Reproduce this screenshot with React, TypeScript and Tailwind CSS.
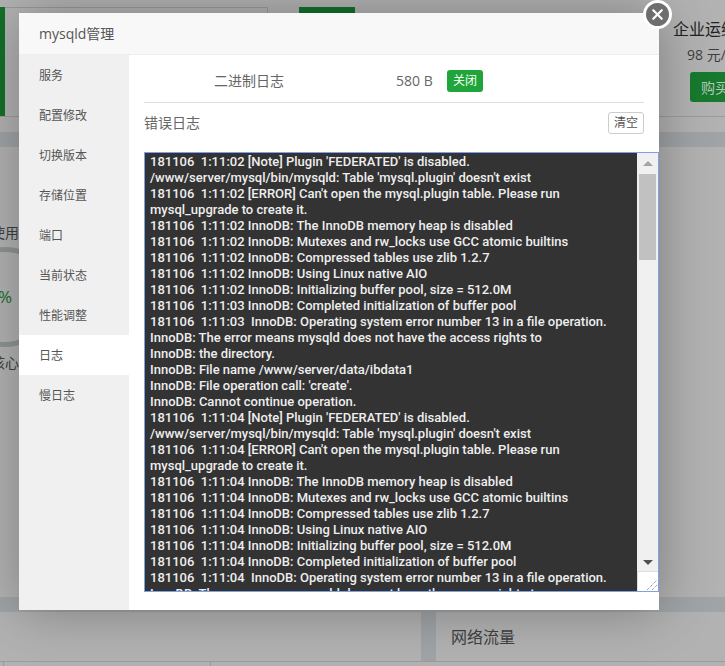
import { X } from "lucide-react";

const menu = ["服务", "配置修改", "切换版本", "存储位置", "端口", "当前状态", "性能调整", "日志", "慢日志"];

const logLines = [
  "181106  1:11:02 [Note] Plugin 'FEDERATED' is disabled.",
  "/www/server/mysql/bin/mysqld: Table 'mysql.plugin' doesn't exist",
  "181106  1:11:02 [ERROR] Can't open the mysql.plugin table. Please run",
  "mysql_upgrade to create it.",
  "181106  1:11:02 InnoDB: The InnoDB memory heap is disabled",
  "181106  1:11:02 InnoDB: Mutexes and rw_locks use GCC atomic builtins",
  "181106  1:11:02 InnoDB: Compressed tables use zlib 1.2.7",
  "181106  1:11:02 InnoDB: Using Linux native AIO",
  "181106  1:11:02 InnoDB: Initializing buffer pool, size = 512.0M",
  "181106  1:11:03 InnoDB: Completed initialization of buffer pool",
  "181106  1:11:03  InnoDB: Operating system error number 13 in a file operation.",
  "InnoDB: The error means mysqld does not have the access rights to",
  "InnoDB: the directory.",
  "InnoDB: File name /www/server/data/ibdata1",
  "InnoDB: File operation call: 'create'.",
  "InnoDB: Cannot continue operation.",
  "181106  1:11:04 [Note] Plugin 'FEDERATED' is disabled.",
  "/www/server/mysql/bin/mysqld: Table 'mysql.plugin' doesn't exist",
  "181106  1:11:04 [ERROR] Can't open the mysql.plugin table. Please run",
  "mysql_upgrade to create it.",
  "181106  1:11:04 InnoDB: The InnoDB memory heap is disabled",
  "181106  1:11:04 InnoDB: Mutexes and rw_locks use GCC atomic builtins",
  "181106  1:11:04 InnoDB: Compressed tables use zlib 1.2.7",
  "181106  1:11:04 InnoDB: Using Linux native AIO",
  "181106  1:11:04 InnoDB: Initializing buffer pool, size = 512.0M",
  "181106  1:11:04 InnoDB: Completed initialization of buffer pool",
  "181106  1:11:04  InnoDB: Operating system error number 13 in a file operation.",
  "InnoDB: The error means mysqld does not have the access rights to",
];

function PageBehind() {
  return (
    <div className="flex h-full flex-col bg-[#a0a4a6] text-[#3f3f3f]">
      <div className="bg-[#b2b2b2]">
        <div className="h-[7px]" />
        <div className="flex h-[110px] border-b border-[#9c9c9c]">
          <div className="w-[5px] shrink-0 bg-[#14702a]" />
          <div className="w-[263px] shrink-0 border-r border-t border-[#9a9a9a]" />
          <div className="ml-[31px] h-full w-[56px] shrink-0 bg-[#14702a]" />
          <div className="ml-[318px] flex shrink-0 flex-col items-start">
            <span className="mt-[13px] whitespace-nowrap text-[16px] leading-[18px] text-[#222]">企业运维</span>
            <span className="mt-[8px] ml-[14px] whitespace-nowrap text-[14px] leading-[18px]">98 元/</span>
            <span className="mt-[8px] ml-[17px] flex h-[30px] w-[60px] items-center rounded-[3px] bg-[#177a2e] pl-[11px] text-[14px] text-[#b5c9b8]">购买</span>
          </div>
        </div>
        <div className="h-[15px]" />
      </div>
      <div className="mt-[15px] h-[450px] bg-[#b2b2b2] pt-[77px]">
        <div className="-ml-[45px] flex w-[100px] flex-col items-center text-[14px] leading-[18px]">
          <span>使用</span>
          <div className="mt-[5px] flex h-[100px] w-[100px] items-center justify-center rounded-full border-[5px] border-[#8f9493] text-[17px] text-[#14702a]">%</div>
          <span className="mt-[7px]">核心</span>
        </div>
      </div>
      <div className="mt-[15px] flex flex-1 flex-col bg-[#b2b2b2]">
        <div className="flex h-[50px] shrink-0 gap-[15px] border-b border-[#9c9c9c] bg-[#a0a4a6]">
          <div className="flex-1 bg-[#b2b2b2]" />
          <div className="w-[289px] shrink-0 bg-[#b2b2b2] pl-[15px] pt-[16px] text-[16px] leading-[18px]">网络流量</div>
        </div>
        <div className="ml-[3px] h-full w-[208px] border-x border-[#9c9c9c]" />
      </div>
    </div>
  );
}

export default function App() {
  return (
    <div className="relative h-[666px] w-[725px] overflow-hidden font-['Open_Sans','Noto_Sans_CJK_SC',sans-serif]">
      <PageBehind />

      {/* modal */}
      <div className="absolute left-[19px] top-[13px] flex h-[597px] w-[640px] flex-col bg-white shadow-[1px_1px_50px_rgba(0,0,0,0.3)]">
        <div className="flex h-[42px] shrink-0 items-center border-b border-[#eeeeee] bg-[#f8f8f8] pl-[20px] text-[14px] text-[#555]">
          mysqld管理
        </div>
        <div className="flex min-h-0 flex-1">
          <div className="w-[110px] shrink-0 bg-[#f0f0f0]">
            {menu.map((m) => (
              <div
                key={m}
                className={`flex h-[40px] items-center pl-[20px] pt-[2px] text-[12px] text-[#555] ${m === "日志" ? "bg-white" : ""}`}
              >
                {m}
              </div>
            ))}
          </div>
          <div className="min-w-0 flex-1 pl-[15px]">
            <div className="mr-[15px] flex h-[48px] items-center border-b border-[#dddddd] pt-[4px] text-[14px] text-[#666]">
              <span className="ml-[70px] w-[182px]">二进制日志</span>
              <span className="w-[51px]">580 B</span>
              <span className="flex h-[22px] w-[36px] items-center justify-center rounded-[3px] bg-[#20a53a] text-[12px] text-white">关闭</span>
            </div>
            <div className="mr-[15px] flex h-[40px] items-center justify-between pb-[2px] text-[14px] text-[#666]">
              <span>错误日志</span>
              <span className="mt-[2px] flex h-[22px] w-[36px] items-center justify-center rounded-[3px] border border-[#cccccc] text-[12px] text-[#555]">清空</span>
            </div>
            <div className="mt-[9px] flex h-[440px] w-full overflow-hidden border border-[#7ba2e6] bg-[#333333]">
              <div className="min-w-0 flex-1 overflow-hidden whitespace-pre pl-[5px] pt-[1px] font-['Roboto',sans-serif] text-[13px] font-medium leading-[16px] text-[#eeeeee]">
                {logLines.map((l, i) => (
                  <div key={i}>{l}</div>
                ))}
              </div>
              <div className="flex w-[21px] shrink-0 flex-col bg-[#f0f0f0]">
                <div className="flex h-[21px] items-center justify-center">
                  <div className="h-0 w-0 border-x-[5px] border-b-[5px] border-x-transparent border-b-[#a3a3a3]" />
                </div>
                <div className="ml-[2px] mr-[2px] h-[86px] bg-[#c1c1c1]" />
                <div className="flex-1" />
                <div className="flex h-[17px] items-center justify-center">
                  <div className="h-0 w-0 border-x-[5px] border-t-[5px] border-x-transparent border-t-[#505050]" />
                </div>
                <div className="flex h-[20px] items-end justify-end border-l border-t border-[#dddddd] bg-white">
                  <svg width="12" height="12" viewBox="0 0 12 12" stroke="#777" strokeWidth="1" strokeDasharray="1 1">
                    <path d="M1 11 L11 1 M6 11 L11 6" />
                  </svg>
                </div>
              </div>
            </div>
          </div>
        </div>
      </div>

      {/* close */}
      <div className="absolute left-[643px] top-0 flex h-[29px] w-[29px] items-center justify-center rounded-full border-[3px] border-white bg-[#6e6e6e]">
        <X size={17} strokeWidth={3} color="#ffffff" />
      </div>
    </div>
  );
}
